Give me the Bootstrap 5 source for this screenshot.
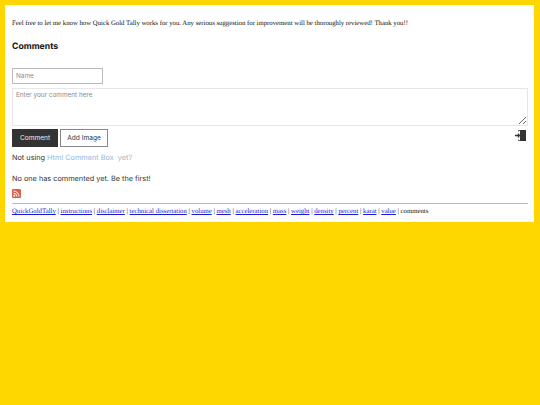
<!DOCTYPE html>
<html lang="en">
<head>
<meta charset="utf-8">
<title>Comments</title>
<link href="https://cdn.jsdelivr.net/npm/bootstrap@5.3.0/dist/css/bootstrap.min.css" rel="stylesheet">
<style>
html,body{height:100%}
body{background:#ffd700;padding:5px 6px 0 5px;font-family:"Liberation Serif",serif;font-size:6.75px;color:#000;overflow:hidden;text-rendering:geometricPrecision}
.sheet{background:#fff;height:217px;padding:0 6px 0 7px;box-shadow:inset 0 0 0 1px #fffbe0}
.intro{margin:0;padding-top:13px;line-height:11px;height:28px;color:#111}
.mont{font-family:Inter,"DejaVu Sans",sans-serif}
.headline{font-size:8.7px;font-weight:700;margin:0;padding-top:9px;height:35px;line-height:11px;color:#111}
.namebox{width:91px;height:16px;border:1px solid #bbb;font-size:6.4px;padding:0 3px;display:block;margin-bottom:4px;border-radius:0;outline:0}
.bodybox{width:516px;height:38px;border:1px solid #e6e6e6;font-size:6.4px;padding:2px 3px;display:block;border-radius:0;resize:vertical;outline:0}
.namebox::placeholder,.bodybox::placeholder{color:#8a8a8a}
.btn-dark-c,.btn-light-c{font-size:6.6px;height:18px;padding:0;border-radius:0;line-height:14px}
.btn-dark-c,.btn-dark-c:hover{width:46px;background:#333;color:#eee;border:1px solid #333}
.btn-light-c,.btn-light-c:hover{width:48px;background:#fff;color:#333;border:1px solid #888}
.actions{margin-top:3px;gap:2px}
.using{font-size:7.3px;margin-top:6px;line-height:10px;color:#333}
.using a{color:#8fb6e6;text-decoration:none}
.using span{color:#b0b0b0}
.none{font-size:7.3px;margin-top:11px;line-height:10px;color:#333}
.feed{display:block;width:9px;height:9px;margin-top:5px}
.rule{border:0;border-top:1px solid #bbb;opacity:1;margin:5px 0 0}
.crumbs{line-height:11px;margin-top:2px;color:#111}
.crumbs a{color:#1a1ad6}
.exit{margin:1px 2px 0 auto}
</style>
</head>
<body>
<div class="sheet">
<p class="intro">Feel free to let me know how Quick Gold Tally works for you. Any serious suggestion for improvement will be thoroughly reviewed! Thank you!!</p>
<h2 class="headline mont">Comments</h2>
<input class="namebox mont" type="text" placeholder="Name">
<textarea class="bodybox mont" placeholder="Enter your comment here"></textarea>
<div class="actions d-flex align-items-start">
<button class="btn btn-dark-c mont" type="button">Comment</button>
<button class="btn btn-light-c mont" type="button">Add Image</button>
<svg class="exit" width="11" height="11" viewBox="0 0 11 11"><rect x="5" y="0" width="6" height="11" fill="#333"/><path d="M3.500 1.500V.5h2M3.500 9.500v1h2" stroke="#333" stroke-width=".8" fill="none"/><path d="M0 5.500h5M3.500 3.500v4" stroke="#333" stroke-width="1.400"/></svg>
</div>
<div class="using mont">Not using <a href="#">Html Comment Box</a>&nbsp; <span>yet?</span></div>
<div class="none mont">No one has commented yet. Be the first!</div>
<svg class="feed" viewBox="0 0 9 9"><rect width="9" height="9" rx="1" fill="#d9604c"/><circle cx="2.200" cy="6.800" r="1" fill="#fff"/><path d="M1.500 4.200a3.300 3.300 0 0 1 3.300 3.300M1.500 2a5.500 5.500 0 0 1 5.500 5.500" stroke="#fff" stroke-width="1" fill="none"/></svg>
<hr class="rule">
<div class="crumbs"><a href="#">QuickGoldTally</a> | <a href="#">instructions</a> | <a href="#">disclaimer</a> | <a href="#">technical dissertation</a> | <a href="#">volume</a> | <a href="#">mesh</a> | <a href="#">acceleration</a> | <a href="#">mass</a> | <a href="#">weight</a> | <a href="#">density</a> | <a href="#">percent</a> | <a href="#">karat</a> | <a href="#">value</a> | comments</div>
</div>
<script src="https://cdn.jsdelivr.net/npm/bootstrap@5.3.0/dist/js/bootstrap.bundle.min.js"></script>
</body>
</html>
